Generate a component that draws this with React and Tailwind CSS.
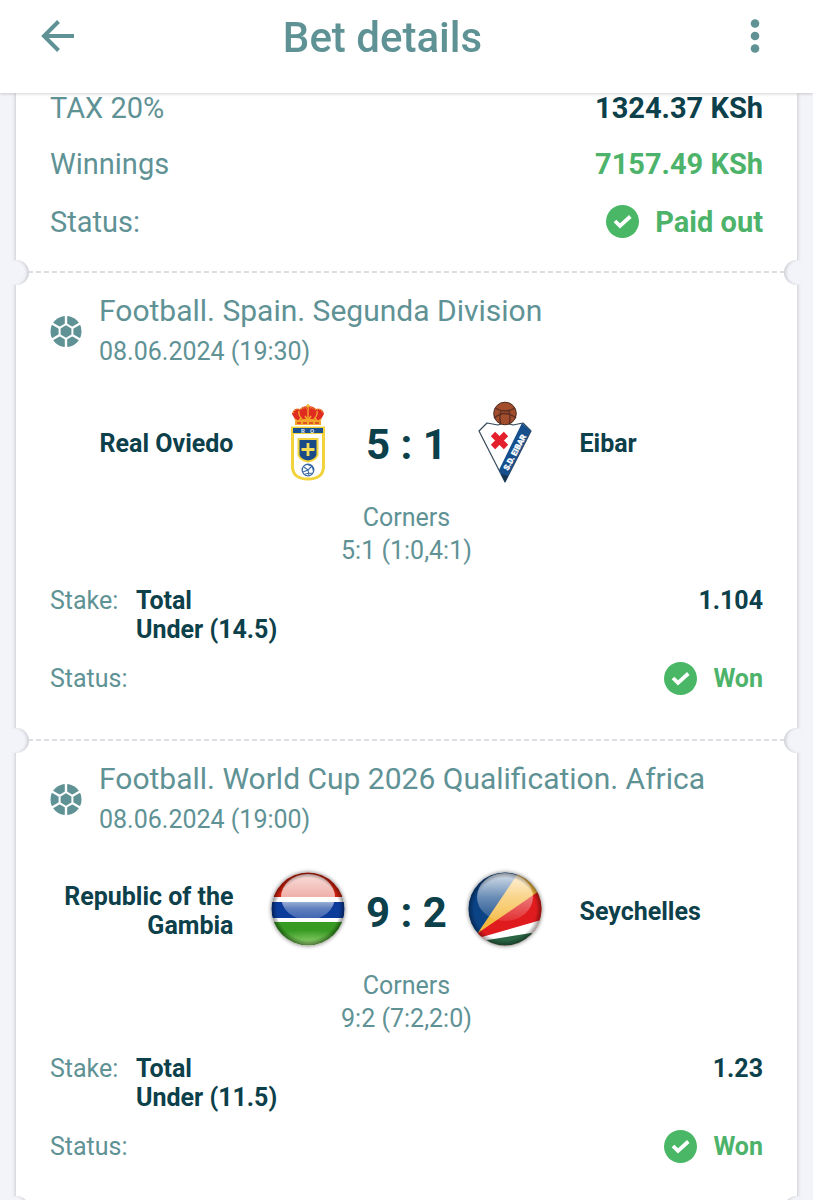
const bets = [
  {
    id: 1,
    league: "Football. Spain. Segunda Division",
    date: "08.06.2024 (19:30)",
    home: "Real Oviedo",
    away: "Eibar",
    homeLogo: OviedoCrest,
    awayLogo: EibarCrest,
    score: "5 : 1",
    detail: "5:1 (1:0,4:1)",
    pick: "Under (14.5)",
    odds: "1.104",
  },
  {
    id: 2,
    league: "Football. World Cup 2026 Qualification. Africa",
    date: "08.06.2024 (19:00)",
    home: "Republic of the Gambia",
    away: "Seychelles",
    homeLogo: GambiaFlag,
    awayLogo: SeychellesFlag,
    score: "9 : 2",
    detail: "9:2 (7:2,2:0)",
    pick: "Under (11.5)",
    odds: "1.23",
  },
];

function OviedoCrest() {
  return (
    <svg viewBox="0 0 80 84" className="h-[84px] w-20 shrink-0" role="img" aria-label="Real Oviedo">
      <path d="M23.500 27H54.500V66Q54 78 39 78Q24 78 23.500 66Z" fill="#fff" stroke="#f3d33c" strokeWidth="3" />
      <rect x="22" y="26" width="34" height="7" fill="#f3d33c" />
      <rect x="24" y="27" width="30" height="5" fill="#1c4f8f" />
      <text x="34" y="32" fill="#dfe8f2" fontSize="6" fontWeight="700" fontFamily="Roboto, sans-serif" textAnchor="middle">R</text>
      <text x="43" y="32" fill="#dfe8f2" fontSize="6" fontWeight="700" fontFamily="Roboto, sans-serif" textAnchor="middle">O</text>
      <path d="M27 20L23 13Q24 7 31 8Q35 4 39 6Q43 4 47 8Q54 7 55 13L51 20Z" fill="#e02c20" />
      <path d="M24 12Q27 6 31 9Q35 5 39 8Q43 5 47 9Q51 6 54 12" fill="none" stroke="#f1a52f" strokeWidth="1.2" strokeDasharray="1.500 1" />
      <path d="M30 10Q29 14 33 18M48 10Q49 14 45 18M39 8V18" stroke="#f1a52f" strokeWidth="1.4" fill="none" />
      <path d="M26 20Q39 15 52 20V24H26Z" fill="#f4a62a" />
      <path d="M26 18l3 3 3-4M46 17l3 4 3-3M36 15l3 4 3-4" stroke="#f4a62a" strokeWidth="1.6" fill="none" />
      <path d="M28 22H50" stroke="#d63a22" strokeWidth="1.6" strokeDasharray="4 2" />
      <path d="M37 5h4M39 3v4" stroke="#eeb52a" strokeWidth="1.4" />
      <path d="M29.500 38H48.500V54Q47 59 39 60.500Q31 59 29.500 54Z" fill="#1b4b87" stroke="#f3d33c" strokeWidth="2" />
      <path d="M39 42V55M32.500 48.500H45.500" stroke="#f7dc58" strokeWidth="2.800" />
      <circle cx="39" cy="69" r="5.800" fill="#fff" stroke="#3a6ba6" strokeWidth="1.3" />
      <path d="M34 71L39 69L43 65M35 66L39 69L40 74.500M38 63.500L43 65L44.500 70M35 73.500L40 72L44 72.500" fill="none" stroke="#3a6ba6" strokeWidth="1.1" />
    </svg>
  );
}

function EibarCrest() {
  return (
    <svg viewBox="0 0 80 84" className="h-[84px] w-20 shrink-0" role="img" aria-label="Eibar">
      <path d="M22 22L33 24Q40 20 48 24L58 22L66 30L40 81L14 30Z" fill="#fff" stroke="#34495a" strokeWidth="1.2" strokeLinejoin="round" />
      <path d="M57 22L66 30L40 81L34 69Z" fill="#174f8d" />
      <path d="M36 73L40 81L43 75Z" fill="#17344f" />
      <text transform="translate(43 70) rotate(-62)" fill="#fff" stroke="#fff" strokeWidth="0.3" fontSize="8" fontWeight="900" fontFamily="Roboto, sans-serif">S.D. EIBAR</text>
      <path d="M28 33L41 46M41 33L28 46" stroke="#e3202b" strokeWidth="6.200" />
      <circle cx="40" cy="12.500" r="11.300" fill="#a24e2c" stroke="#482b22" strokeWidth="1" />
      <path d="M30 7Q40 13 50 7M29 17Q40 8 51 17M36 10Q34 17 36 23.500M44 10Q46 17 44 23.500" fill="none" stroke="#5a2e22" strokeWidth="1.3" />
    </svg>
  );
}

function GambiaFlag() {
  return (
    <svg viewBox="0 0 80 84" className="h-[84px] w-20 shrink-0 overflow-visible drop-shadow-[0_0_2px_rgba(0,0,0,0.55)]" role="img" aria-label="Gambia">
      <defs>
        <clipPath id="gm-clip">
          <circle cx="39" cy="40" r="36.500" />
        </clipPath>
        <radialGradient id="gm-green" cx="0.5" cy="0.9" r="0.6">
          <stop offset="0" stopColor="#9bd876" />
          <stop offset="1" stopColor="#379a22" />
        </radialGradient>
        <linearGradient id="gm-gloss" x1="0" y1="0" x2="0" y2="1">
          <stop offset="0" stopColor="#fff" stopOpacity="0.85" />
          <stop offset="0.6" stopColor="#fff" stopOpacity="0.6" />
          <stop offset="0.75" stopColor="#fff" stopOpacity="0.35" />
          <stop offset="1" stopColor="#fff" stopOpacity="0.2" />
        </linearGradient>
        <radialGradient id="gm-edge">
          <stop offset="0.85" stopColor="#000" stopOpacity="0" />
          <stop offset="1" stopColor="#000" stopOpacity="0.45" />
        </radialGradient>
      </defs>
      <g clipPath="url(#gm-clip)">
        <rect width="80" height="84" fill="#fff" />
        <rect y="3" width="80" height="25" fill="#d3220f" />
        <rect y="33" width="80" height="16" fill="#0b3b9b" />
        <rect y="53" width="80" height="26" fill="url(#gm-green)" />
        <ellipse cx="39" cy="28" rx="27" ry="23" fill="url(#gm-gloss)" />
        <circle cx="39" cy="40" r="36.500" fill="url(#gm-edge)" />
      </g>
    </svg>
  );
}

function SeychellesFlag() {
  return (
    <svg viewBox="0 0 80 84" className="h-[84px] w-20 shrink-0 overflow-visible drop-shadow-[0_0_2px_rgba(0,0,0,0.55)]" role="img" aria-label="Seychelles">
      <defs>
        <clipPath id="sc-clip">
          <circle cx="40" cy="40" r="36.500" />
        </clipPath>
        <linearGradient id="sc-gloss" x1="0" y1="0" x2="0" y2="1">
          <stop offset="0" stopColor="#fff" stopOpacity="0.85" />
          <stop offset="0.5" stopColor="#fff" stopOpacity="0.4" />
          <stop offset="1" stopColor="#fff" stopOpacity="0.1" />
        </linearGradient>
        <radialGradient id="sc-edge">
          <stop offset="0.85" stopColor="#000" stopOpacity="0" />
          <stop offset="1" stopColor="#000" stopOpacity="0.4" />
        </radialGradient>
      </defs>
      <g clipPath="url(#sc-clip)">
        <rect width="80" height="84" fill="#0a4386" />
        <path d="M10 68L54 3H80V84H10Z" fill="#f5b93f" />
        <path d="M10 66L80 18V84H10Z" fill="#e01b1d" />
        <path d="M10 70L80 50V84H10Z" fill="#fff" />
        <path d="M10 73L66 64L80 62V84H10Z" fill="#2a6544" />
        <ellipse cx="40" cy="28" rx="28" ry="24" fill="url(#sc-gloss)" />
        <circle cx="40" cy="40" r="36.500" fill="url(#sc-edge)" />
      </g>
    </svg>
  );
}

function BallIcon() {
  return (
    <svg viewBox="0 0 32 32" className="size-8 shrink-0" aria-hidden="true">
      <circle cx="16" cy="15.500" r="15.500" fill="#5f9295" />
      <path d="M16 0V31M2 7.500L30 23.500M2 23.500L30 7.500" stroke="#fff" strokeWidth="2.400" />
      <path d="M16 7L23.400 11.200V19.800L16 24L8.600 19.800V11.200Z" fill="#fff" />
      <path d="M16 9.300L21.400 12.400V18.600L16 21.700L10.600 18.600V12.400Z" fill="#5f9295" />
    </svg>
  );
}

function StatusValue({ children }) {
  return (
    <span className="flex items-center gap-4 font-bold text-[#4db36a]">
      <svg viewBox="0 0 34 34" className="size-[34px]" aria-hidden="true">
        <circle cx="17.500" cy="16.500" r="16.500" fill="#49b766" />
        <path d="M10 16L15 20.800L25.300 11.500" fill="none" stroke="#fff" strokeWidth="3.800" />
      </svg>
      {children}
    </span>
  );
}

// Dashed tear line with a round notch on each side of the ticket
function TearLine() {
  return (
    <div className="relative h-0">
      <div className="absolute inset-x-3 -top-px h-[2px] bg-[repeating-linear-gradient(90deg,#dcdee4_0_5px,transparent_5px_8px)]" />
      <div className="absolute -left-1 -top-3 h-[25px] w-[17px] rounded-r-full bg-[#f3f4f9] shadow-[inset_-3px_0_3px_-1px_#cfd0d6]" />
      <div className="absolute -right-1 -top-3 h-[25px] w-[17px] rounded-l-full bg-[#f3f4f9] shadow-[inset_3px_0_3px_-1px_#cfd0d6]" />
    </div>
  );
}

function BetCard({ bet }) {
  const HomeLogo = bet.homeLogo;
  const AwayLogo = bet.awayLogo;

  return (
    <section className="px-[34px] pt-6 pb-11 text-[25px]">
      <div className="flex items-center gap-[17px]">
        <BallIcon />
        <div>
          <h2 className="text-[30px] leading-[30px]">{bet.league}</h2>
          <p className="mt-[11px] leading-[30px]">{bet.date}</p>
        </div>
      </div>

      <div className="mt-[34px] flex items-center font-bold text-[#0c404a]">
        <p className="flex-1 pr-[35px] text-right leading-[29px]">{bet.home}</p>
        <HomeLogo />
        <p className="w-[116px] pt-[3px] text-center text-[42px] leading-[48px]">{bet.score}</p>
        <AwayLogo />
        <p className="flex-1 pl-[35px] leading-[29px]">{bet.away}</p>
      </div>

      <div className="mt-4 text-center leading-[33px]">
        <p>Corners</p>
        <p>{bet.detail}</p>
      </div>

      <div className="mt-[19px] flex leading-[29px]">
        <span className="w-[86px]">Stake:</span>
        <div className="flex-1 font-bold text-[#0c404a]">
          <p>Total</p>
          <p>{bet.pick}</p>
        </div>
        <span className="font-bold text-[#0c404a]">{bet.odds}</span>
      </div>

      <div className="mt-[18px] flex items-center justify-between leading-[34px]">
        <span>Status:</span>
        <StatusValue>Won</StatusValue>
      </div>
    </section>
  );
}

function App() {
  return (
    <div className="h-screen overflow-y-auto bg-[#f3f4f9] font-[Roboto,sans-serif] text-[#5f9295] [scrollbar-width:none]">
      <header className="sticky top-0 z-10 flex h-[93px] items-center bg-white px-[38px] pb-[22px] shadow-[0_1px_3px_rgba(0,0,0,0.18)]">
        <button type="button" aria-label="Back">
          <svg viewBox="0 0 40 40" className="size-10" fill="none" stroke="currentColor" strokeWidth="4">
            <path d="M36 20H6M20.500 5.500L6 20L20.500 34.500" />
          </svg>
        </button>
        <h1 className="flex-1 pt-1 pr-12 text-center text-[42px] leading-[48px] font-medium">Bet details</h1>
        <button type="button" aria-label="More options">
          <svg viewBox="0 0 40 40" className="size-10" fill="currentColor">
            <circle cx="20" cy="7.500" r="4.300" />
            <circle cx="20" cy="20" r="4.300" />
            <circle cx="20" cy="32.500" r="4.300" />
          </svg>
        </button>
      </header>

      <main className="px-4">
        <div className="bg-white shadow-[0_0_4px_rgba(0,0,0,0.25)]">
          <section className="flex flex-col gap-[26px] px-[34px] pb-[33px] text-[29px] leading-[30px]">
            <div className="flex justify-between">
              <span>TAX 20%</span>
              <span className="font-bold text-[#0c404a]">1324.37 KSh</span>
            </div>
            <div className="flex justify-between">
              <span>Winnings</span>
              <span className="font-bold text-[#4db36a]">7157.49 KSh</span>
            </div>
            <div className="flex items-center justify-between">
              <span>Status:</span>
              <StatusValue>Paid out</StatusValue>
            </div>
          </section>

          {bets.map((bet) => (
            <div key={bet.id}>
              <TearLine />
              <BetCard bet={bet} />
            </div>
          ))}
          <TearLine />
        </div>
      </main>
    </div>
  );
}

export default App;
